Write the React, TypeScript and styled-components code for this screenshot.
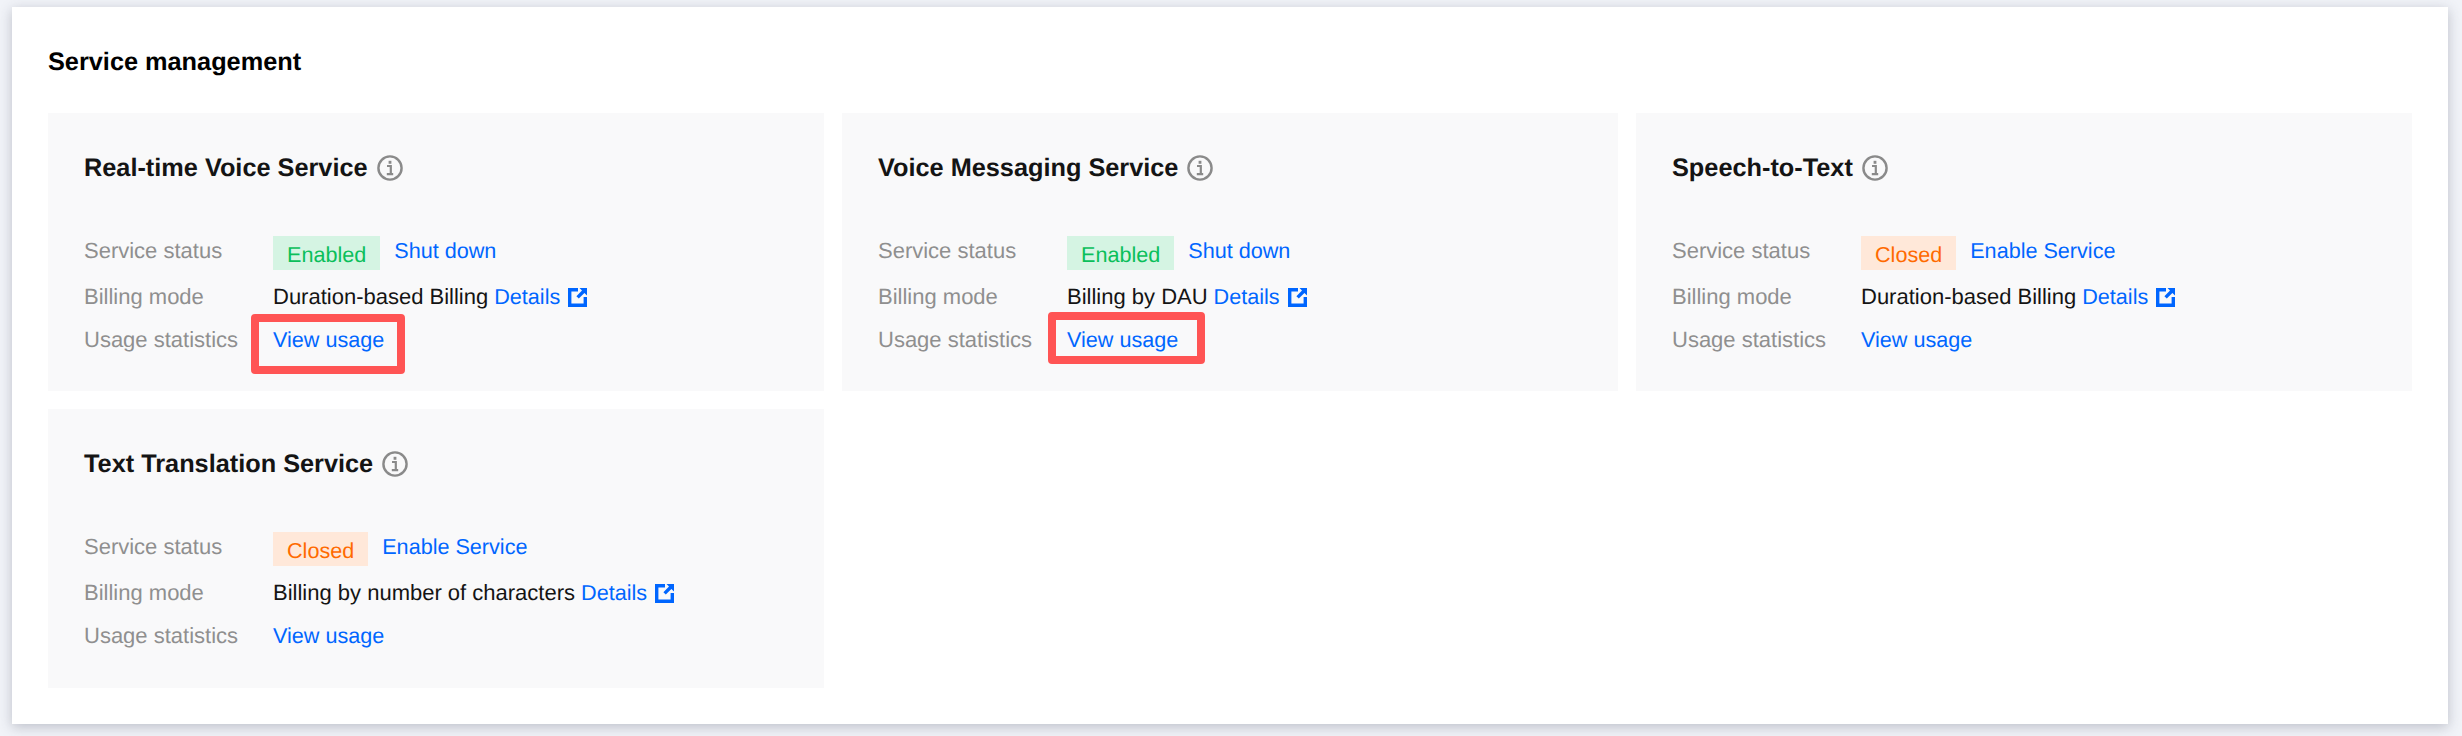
import React from "react";
import styled, { createGlobalStyle } from "styled-components";

const Global = createGlobalStyle`
  html, body { margin: 0; padding: 0; background: #f1f3f8; }
  body { font-family: "Liberation Sans", Arial, sans-serif; text-rendering: geometricPrecision; }
`;
const Page = styled.div`
  width: 2462px; height: 736px; box-sizing: border-box; padding: 7px 14px 12px 12px; overflow: hidden;
`;
const Panel = styled.section`
  height: 717px; box-sizing: border-box; background: #fff; padding: 0 36px 0 36px;
  box-shadow: 0 3px 12px rgba(54, 58, 80, 0.28);
`;
const Heading = styled.h2`
  margin: 0; padding-top: 40px; height: 106px; box-sizing: border-box;
  font-size: 25.3px; line-height: 30px; font-weight: 700; color: #000;
`;
const Grid = styled.div`
  display: grid; grid-template-columns: repeat(3, 776px); column-gap: 18px; row-gap: 18px; grid-auto-rows: 278px 279px;
`;
const Card = styled.article`
  background: #f9f9fa; padding: 40px 36px 0; box-sizing: border-box;
`;
const CardTitle = styled.h3`
  margin: 0; display: flex; align-items: center; gap: 9px; height: 30px;
  font-size: 25.3px; line-height: 30px; font-weight: 700; color: #141414;
`;
const Rows = styled.div`
  margin-top: 45px; display: flex; flex-direction: column;
`;
const Row = styled.div<{ $h: number }>`
  display: flex; align-items: center; height: ${(p) => p.$h}px; font-size: 22px; color: #141414; position: relative;
`;
const Label = styled.span`
  width: 189px; flex: none; color: #8f8f8f;
`;
const Tag = styled.span<{ $tone: "ok" | "off" }>`
  display: inline-flex; align-items: center; justify-content: center; box-sizing: border-box;
  height: 34px; padding: 3px 14px 0; margin-right: 14px; margin-top: 4px; font-size: 21.6px;
  background: ${(p) => (p.$tone === "ok" ? "#d5f4e3" : "#ffe8d9")};
  color: ${(p) => (p.$tone === "ok" ? "#0abf5b" : "#ff6a00")};
`;
const Link = styled.a`
  color: #0066ff; text-decoration: none; display: inline-flex; align-items: center; font-size: 21.6px;
`;
const Gap = styled.span`
  width: 6px; display: inline-block;
`;
const IconGap = styled.span`
  display: inline-flex; margin-left: 8px;
`;
const Highlight = styled.span<{ $left: number; $top: number; $w: number; $h: number }>`
  position: absolute; left: ${(p) => p.$left}px; top: ${(p) => p.$top}px; width: ${(p) => p.$w}px; height: ${(p) => p.$h}px;
  box-sizing: border-box; border: 8px solid #ff5454; border-radius: 4px; pointer-events: none;
`;

const Info = () => (
  <svg width="26" height="26" viewBox="0 0 26 26" fill="none" aria-hidden="true">
    <circle cx="13" cy="13" r="11.6" stroke="#8a8a8a" strokeWidth="2.4" />
    <rect x="11.6" y="5.8" width="2.8" height="3" fill="#8a8a8a" />
    <path d="M10 11h3.8v8M9.8 19.2h6.4" stroke="#8a8a8a" strokeWidth="2.2" />
  </svg>
);
const External = () => (
  <svg width="19" height="19" viewBox="0 0 19 19" fill="#0066ff" aria-hidden="true">
    <path d="M0 0h10v3.4H3.4v12.2h12.2V9H19v10H0z" />
    <path d="M11.5 0H19v7.5l-2.6-2.6-5.6 5.7-2.4-2.4 5.6-5.7z" />
  </svg>
);

type Mark = { left: number; top: number; w: number; h: number };
type Service = { title: string; on: boolean; billing: string; mark?: Mark };
const services: Service[] = [
  { title: "Real-time Voice Service", on: true, billing: "Duration-based Billing", mark: { left: 167, top: -6, w: 154, h: 60 } },
  { title: "Voice Messaging Service", on: true, billing: "Billing by DAU", mark: { left: 170, top: -8, w: 157, h: 52 } },
  { title: "Speech-to-Text", on: false, billing: "Duration-based Billing" },
  { title: "Text Translation Service", on: false, billing: "Billing by number of characters" },
];

export default function App() {
  return (
    <Page>
      <Global />
      <Panel>
        <Heading>Service management</Heading>
        <Grid>
          {services.map((s) => (
            <Card key={s.title}>
              <CardTitle>{s.title}<Info /></CardTitle>
              <Rows>
                <Row $h={46}>
                  <Label>Service status</Label>
                  <Tag $tone={s.on ? "ok" : "off"}>{s.on ? "Enabled" : "Closed"}</Tag>
                  <Link href="#">{s.on ? "Shut down" : "Enable Service"}</Link>
                </Row>
                <Row $h={46}>
                  <Label>Billing mode</Label>
                  {s.billing}<Gap />
                  <Link href="#">Details<IconGap><External /></IconGap></Link>
                </Row>
                <Row $h={40}>
                  <Label>Usage statistics</Label>
                  <Link href="#">View usage</Link>
                  {s.mark && <Highlight $left={s.mark.left} $top={s.mark.top} $w={s.mark.w} $h={s.mark.h} />}
                </Row>
              </Rows>
            </Card>
          ))}
        </Grid>
      </Panel>
    </Page>
  );
}
